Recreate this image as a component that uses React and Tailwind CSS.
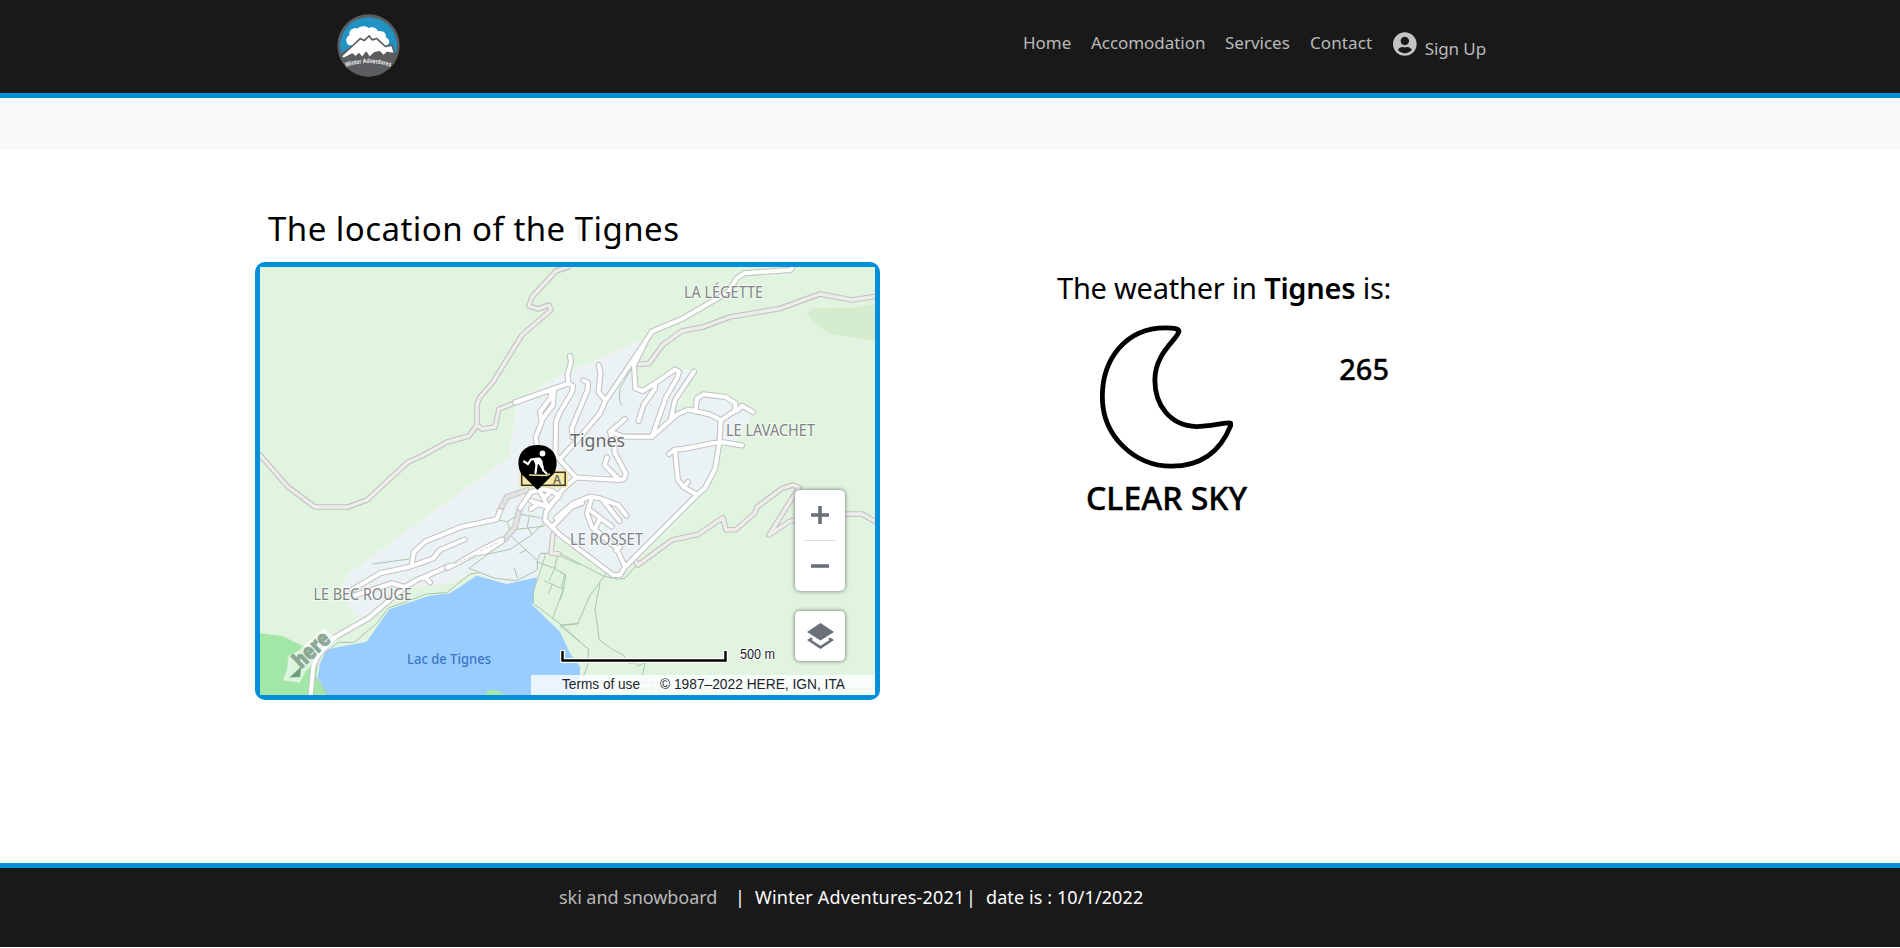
import React from "react";

const NAV = [
  { label: "Home", cls: "-ml-px w-[48px] tracking-[-0.05px]" },
  { label: "Accomodation", cls: "w-[114px] tracking-[-0.05px]" },
  { label: "Services", cls: "w-[65px] tracking-[0px]" },
  { label: "Contact", cls: "w-[63px] tracking-[0.1px]" },
];

function Logo() {
  return (
    <svg viewBox="0 0 190 190" className="h-[63px] w-[63px]">
      <circle cx="95" cy="95" r="94" fill="#5b5d60" />
      <path d="M12 118 A86 86 0 1 1 178 118 Z" fill="#2292c3" />
      <path d="M10 122 L34 103 L160 100 L181 122 L165 157 A93 93 0 0 1 25 157 Z" fill="#5b5d60" />
      <path
        d="M36 94 C24 88 26 68 38 64 C34 48 50 40 62 44 C72 34 90 36 94 42 C108 36 122 44 123 52 C138 48 150 58 147 70 C162 76 160 94 146 95 Z"
        fill="#fff"
      />
      <path
        d="M12 128 L38 104 L70 74 L82 80 L97 66 L106 78 L120 74 L146 98 L166 94 L174 120 L152 116 L140 126 L128 114 L112 118 L98 132 L88 116 L76 132 L66 120 L56 130 L46 121 L20 134 Z"
        fill="#fff"
        stroke="#5b5d60"
        strokeWidth="5"
        strokeLinejoin="round"
      />
      <path id="logoArc" d="M27 160 Q95 136 165 160" fill="none" />
      <text fill="#f2f2f2" fontFamily="Liberation Sans, sans-serif" fontWeight="700" fontSize="20">
        <textPath href="#logoArc" textLength="138" lengthAdjust="spacingAndGlyphs">
          Winter Adventures
        </textPath>
      </text>
    </svg>
  );
}

function UserIcon() {
  return (
    <svg viewBox="0 0 496 512" className="ml-px h-[26px] w-[25px]" fill="#c4c4c4">
      <path d="M248 8C111 8 0 119 0 256s111 248 248 248 248-111 248-248S385 8 248 8zm0 96c48.600 0 88 39.400 88 88s-39.400 88-88 88-88-39.400-88-88 39.400-88 88-88zm0 344c-58.700 0-111.300-26.600-146.500-68.200 18.800-35.400 55.600-59.800 98.500-59.800 2.400 0 4.800.4 7.100 1.100 13 4.200 26.600 6.900 40.900 6.900 14.300 0 28-2.700 40.900-6.900 2.300-.7 4.700-1.100 7.100-1.100 42.900 0 79.700 24.400 98.500 59.800C359.300 421.400 306.700 448 248 448z" />
    </svg>
  );
}

/* Roads with an unpaved or tunnel surface */
const MINOR = [
  "M568 267L556 271L532 297L529 306L538 309L549 305L551 310L522 335L493 382L480 397L477 404V425L469 436L447 442L422 456L408 462L367 500L348 507L315 507L288 487L260 455",
  "M477 425L482 429L495 427L499 409L517 402",
  "M636 364.500L649 363.500L663 344.500L682 331L703 327L730 317L780 308.500L820 294L852 300L875 296.500",
  "M633 558L638 565L672 540L698 534.500L723 517.500L726 530L736 529.500L755 513L757 507L782 488.500L793 485L799 487.500L769 535L790 521L845 514H862L875 521.500",
  "M553 534L551 553L559 554",
];
const TUNNEL = ["M499 512L507 497L527 490", "M505 539L515 527L520 508"];

const STREETS = [
  "M515 402.500L568 383.500L573 386L572 392L559.500 413L556 422L555.500 455L559.500 459.500L576 477.500L563 489L546 512L545 520L552 527L560 535L613 575H620L625 567L697 495L705 488L715 469L719.500 442L720.700 420L710 414.500L688 409.500L677 414.500L652 436.700H623L610 431.700L625 419",
  "M570 356L571 362L567.500 375L568.500 383",
  "M551 389V397L540 412L541.700 422L535.700 437L537 446",
  "M554 390L553 405L541.700 420",
  "M583.500 380.500L588 382.500L587.500 390L571.700 428.500L572.500 437",
  "M598.700 365L600.500 373L598.500 392L605 400",
  "M792 268L790 270L744 273.300L736.700 278.300L728.300 292L683.300 318.300L651.700 331.700L645 342.300L605 401.500L600 413.300L580 437L559.500 459.500",
  "M645 343L634 365L635.300 388.300L642.700 391L655 383.300L675 369.500L679 372L677 378.300L666 397L652 436.700",
  "M655 384V388.500L643.500 405L638.500 421",
  "M694 371.500L675 400L671 418",
  "M695.700 409L697 398.500L703.300 394.300L725.700 397L735.500 403.500L735 411L730 414L720.700 420.700M735 411L738 410L741.700 405.700L753 412",
  "M742 445.500L720 441.700L683 449L675 449.500L669 454M675 450L676.700 468.300L678 480L683.500 487L697.500 495M683.500 487L688 482",
  "M610 431.700L614 445L615 453.300L625.700 473.500L624 479L619 480L576 477.500M607 457.500L604.500 465L619 479.500",
  "M552 527L571.700 507L582 503M556 518L573.300 503.300L590 496.500L600 498.300L618 505L626.500 515.500M601.700 499L619.500 521M591.700 498L587 513.300L591.700 526.700L616.700 548.300L625 567M589 509.500L611.500 526.500M600 518.500L594.500 530M616 550L620 547",
  "M310.700 695L313.300 667L318.300 655L333.300 638.300L368.300 618.300L405 587L391.700 583.300L353.300 596M405 587L416.700 580L425 576.700L446.700 567M425 576.700L430 582.500",
  "M351.700 590L380 573.300L410 566.700L433.300 558.300L440 550L464.500 539.500",
  "M411.700 565L414 551.700L425 541.700L460 527.300L496.700 519.300L500 511",
  "M520 508L531 492L543 489L552 491L559 496L548 507L538 504L531 509M531 501L543 505M540 491L546 503M550 492L544 498",
];

const LABEL_FONT = "Noto Sans, Open Sans, sans-serif";

function MapLabel({ x, y, w, size = 16, fill = "#808384", weight = 400, halo = "#ffffff", children }) {
  return (
    <text
      x={x}
      y={y}
      textLength={w}
      lengthAdjust="spacingAndGlyphs"
      fontSize={size}
      fill={fill}
      fontWeight={weight}
      stroke={halo}
      strokeOpacity="0.6"
      strokeWidth="2"
      paintOrder="stroke"
      fontFamily={LABEL_FONT}
    >
      {children}
    </text>
  );
}

function TignesMap() {
  const minor = MINOR.join("");
  const tunnel = TUNNEL.join("");
  const streets = STREETS.join("");
  return (
    <svg viewBox="260 267 615 428" className="block h-[428px] w-[615px]">
      <rect x="260" y="267" width="615" height="428" fill="#e1f4e0" />
      <path d="M807 315L812 308.500L852 307.700L875 304.300V341L850 336.700L828 333.500Z" fill="#d5ecce" />
      <path
        d="M642 341L560 376L525 397L517 403L510 457L350 573L342 587L350 607L358 619L403 587L450 583L472 572L507 584L537 577L540 567L550 547L553 535L613 575L625 570L697 495L706 487L716 468L722 442L735 440L754 412L741 404L726 397L703 394L697 398L695 408L688 409L671 418L695 371L682 370.500L675 369L655 383L643 391L635 388L634 365L645 342Z"
        fill="#ebf2f5"
        stroke="#f1f1f0"
        strokeWidth="1.500"
      />
      <path d="M260 633.300L282 636L305 647L319 657L316 677L327 695H260Z" fill="#a2e6a8" />
      <path
        d="M326.700 649.300L366.700 641.700L389.300 609.300L428.300 596L450 593.300L476.700 575.700L506.700 584L536.700 577.300L532.300 605L560 631.700L570 653.300L580 666.700V677L576.700 695H326.700L317.700 677L320 663.300Z"
        fill="#9acdff"
      />
      <path d="M485 695L488 690L498 690.700L506 695Z" fill="#a2e6a8" />

      {/* Footpaths */}
      <g fill="none" stroke="#a9c6ae" strokeWidth="1">
        <path d="M631.700 368L620 388.300L619.300 400L621.700 405.700" />
        <g transform="translate(250 440) scale(0.33333)" strokeWidth="3">
          <path d="M368 372L478 357M205 655L265 607H313L385 545L413 505L530 462L590 458L660 402L688 398M657 385L715 342L780 328L845 285L880 250M657 385L735 415L800 422L862 390V362L785 290L772 245L745 240M772 245L808 222L870 233L885 245M785 270L885 258M838 230L832 258L845 285M808 340L830 330M792 383L803 415M862 360L872 340H925L913 385L860 365M872 340L887 342L850 455V490L935 555L990 605M925 345L990 375M913 385L947 405L940 448L882 422M897 422L917 378M940 448L907 538M895 462L908 430M935 555L985 550M198 710L232 765" />
        </g>
        <g transform="translate(560 470) scale(0.33333)" strokeWidth="3">
          <path d="M0 250L130 318L175 328L195 325L228 288M140 308L88 380L53 462L0 467L85 537V580L70 620M120 340L105 415L118 510L160 540L190 555L207 580L225 578L235 588L255 578L243 640M0 307L15 313L5 350L12 355L0 390M215 675L240 640L280 637L277 675" />
        </g>
      </g>

      <g fill="none" strokeLinejoin="round" strokeLinecap="round">
        <path d={minor} stroke="#c2c2c0" strokeWidth="5.600" />
        <path d={minor} stroke="#eeedea" strokeWidth="3.400" />
        <path d={tunnel} stroke="#c4c4c4" strokeWidth="6" />
        <path d={tunnel} stroke="#e2e2e2" strokeWidth="4" />
        <path d={streets} stroke="#c3c4c4" strokeWidth="6.200" />
        <path d={streets} stroke="#ffffff" strokeWidth="4" />
      </g>
      <path
        d="M444 568L447 564L453 563L476 550L501 537L505 538L504 543L487 554L476 556L451 569L447 571Z"
        fill="#fff"
        stroke="#c3c4c4"
        strokeWidth="1.200"
        strokeLinejoin="round"
      />
      <path d="M454 564L476 555M480 551L499 542" stroke="#d4d4d4" strokeDasharray="4 1" fill="none" />

      <MapLabel x="684" y="298" w="79">LA LÉGETTE</MapLabel>
      <MapLabel x="726" y="436" w="89">LE LAVACHET</MapLabel>
      <MapLabel x="570" y="447" w="55" size="18.500" fill="#66696b">Tignes</MapLabel>
      <MapLabel x="570" y="544.500" w="73">LE ROSSET</MapLabel>
      <MapLabel x="313.500" y="600" w="98.500">LE BEC ROUGE</MapLabel>
      <MapLabel x="407" y="664" w="84" size="13.500" fill="#3d76c6" weight="500" halo="#9acdff">
        Lac de Tignes
      </MapLabel>

      {/* Road shield */}
      <rect x="519.500" y="470.500" width="48.500" height="17" rx="2" fill="#f4e7a9" />
      <rect x="521.700" y="472.300" width="43.500" height="13" fill="#f4e7a9" stroke="#373527" strokeWidth="1.500" />
      <text x="553" y="483.500" fontSize="12" fill="#77715a" fontWeight="600" fontFamily={LABEL_FONT}>A</text>

      {/* Snowboarder pin */}
      <path
        d="M537.500 490L521.500 474C515 464 518 445 537.500 445C557 445 560 464 553.500 474Z"
        fill="#000"
      />
      <circle cx="542.500" cy="453.500" r="2.900" fill="#fff" />
      <path d="M533 459L540 457.500L542.500 461L543.500 468L541 468L538.500 464L536 466Z" fill="#fff" />
      <path
        d="M524 461.500L528 464L531 459.500L538 458.500M536.500 465L535.500 473M542 465L543 470L546.500 473.500"
        fill="none"
        stroke="#fff"
        strokeWidth="2.200"
        strokeLinejoin="round"
        strokeLinecap="round"
      />
      <path d="M529 475L546 475.500L550 474" fill="none" stroke="#e9dfaa" strokeWidth="1.600" />

      {/* Provider mark */}
      <g transform="translate(299 670) rotate(-43)">
        <path d="M-18 -3L-7 -9L2 -17L12 -14L46 -13L48 3L4 5L-8 9Z" fill="#fff" fillOpacity="0.600" stroke="#fff" strokeOpacity="0.300" strokeWidth="2" strokeLinejoin="round" />
        <text x="2" y="1" textLength="42" lengthAdjust="spacingAndGlyphs" fontSize="22" fontWeight="800" fill="#8ca795" stroke="#8ca795" strokeWidth="0.800" fontFamily="Open Sans, sans-serif">here</text>
        <path d="M-12 -1L4 -1L-4 6Z" fill="#6f9d80" />
      </g>

      {/* Attribution strip and scale bar */}
      <rect x="531" y="675" width="344" height="20" fill="#fff" fillOpacity="0.800" />
      <g fontFamily="Liberation Sans, sans-serif" fill="#20242c" fontSize="14">
        <text x="562" y="689" textLength="78" lengthAdjust="spacingAndGlyphs">Terms of use</text>
        <text x="660" y="689" textLength="185" lengthAdjust="spacingAndGlyphs">© 1987–2022 HERE, IGN, ITA</text>
        <text x="740" y="659" textLength="35" lengthAdjust="spacingAndGlyphs" stroke="#fff" strokeWidth="2" paintOrder="stroke">500 m</text>
      </g>
      <path d="M562.500 650V660.500H725.500V650" fill="none" stroke="#fff" strokeWidth="5" />
      <path d="M562.500 651V660.500H725.500V651" fill="none" stroke="#000" strokeWidth="2.400" />
    </svg>
  );
}

function MapControls() {
  return (
    <div className="absolute right-[30px] bottom-[34px] flex w-[50px] flex-col gap-5">
      <div className="flex h-[101px] flex-col items-center rounded-[5px] bg-white shadow-[0_0_4px_rgba(15,22,33,0.6)]">
        <div className="flex h-[50px] items-center justify-center">
          <svg viewBox="0 0 18 18" className="h-[18px] w-[18px]" stroke="#6a7078" strokeWidth="3.600">
            <path d="M0 9H18M9 0V18" />
          </svg>
        </div>
        <div className="h-px w-8 bg-[#dcdddf]" />
        <div className="flex h-[50px] items-center justify-center">
          <svg viewBox="0 0 18 18" className="h-[18px] w-[18px]" stroke="#6a7078" strokeWidth="3.600">
            <path d="M0 9H18" />
          </svg>
        </div>
      </div>
      <div className="flex h-[50px] items-center justify-center rounded-[5px] bg-white shadow-[0_0_4px_rgba(15,22,33,0.6)]">
        <svg viewBox="0 0 27 26" className="h-[26px] w-[27px]" fill="#6a7078">
          <path d="M13.500 0L27 9L13.500 17.500L0 9Z" />
          <path d="M0 17L4 14.500L6 16L4.500 17L13.500 22.800L22.500 17L21 16L23 14.500L27 17L13.500 26Z" />
        </svg>
      </div>
    </div>
  );
}

function Moon() {
  return (
    <svg viewBox="0 0 400 432" className="h-[144px] w-[133px]" fill="none" stroke="#000" strokeWidth="14.500" strokeLinejoin="round">
      <path d="M197 8C75 8 7 105 7 215C7 335 105 424 215 424C310 424 365 372 393 302Q397 292 385 294C355 297 325 305 290 305C210 302 165 240 165 165C165 85 230 45 237 20Q241 8 197 8Z" />
    </svg>
  );
}

export default function App() {
  return (
    <div className="flex h-[948px] w-[1900px] flex-col overflow-hidden bg-white font-['Noto_Sans','Open_Sans',sans-serif] text-black">
      <header className="flex h-[98px] shrink-0 justify-between border-b-[5px] border-[#008fd9] bg-[#191919] pr-[414px] pl-[337px]">
        <div className="pt-3.5">
          <Logo />
        </div>
        <nav className="flex gap-5 pt-[31px] text-[17px] leading-6 whitespace-nowrap text-[#b9b9b9]">
          {NAV.map((item) => (
            <a key={item.label} className={item.cls}>
              {item.label}
            </a>
          ))}
          <a className="-ml-px flex w-[94px] gap-2">
            <UserIcon />
            <span className="pt-1.5 tracking-[-0.1px]">Sign Up</span>
          </a>
        </nav>
      </header>

      <div className="h-[52px] shrink-0 bg-[#f8f9fb]" />

      <main className="flex h-[713px] shrink-0 pl-[255px]">
        <section className="w-[625px] pt-[54px]">
          <h1 className="h-[58px] pl-[13px] text-[33px] leading-[50px] tracking-[0.46px] whitespace-nowrap">
            The location of the Tignes
          </h1>
          <div className="relative h-[438px] w-[625px] rounded-[10px] border-[5px] border-[#008fd9]">
            <TignesMap />
            <MapControls />
          </div>
        </section>

        <section className="ml-[177px] w-[332px] pt-[118px]">
          <h2 className="text-[29px] leading-10 tracking-[-0.23px] whitespace-nowrap">
            The weather in <b className="font-semibold">Tignes</b> is:
          </h2>
          <div className="flex justify-between">
            <div className="flex w-[220px] flex-col pt-[17px] pl-[30px]">
              <div className="pl-[13px]">
                <Moon />
              </div>
              <p className="-ml-px pt-[5px] text-[32px] leading-[48px] font-medium whitespace-nowrap [-webkit-text-stroke:0.4px_black]">
                CLEAR SKY
              </p>
            </div>
            <p className="pt-[41px] text-[29px] leading-10 font-medium [-webkit-text-stroke:0.3px_black]">265</p>
          </div>
        </section>
      </main>

      <footer className="shrink-0 border-t-[5px] border-[#008fd9]">
        <div className="flex h-[79px] bg-[#191919] pt-[17px] pl-[559px] text-[18px] leading-6 whitespace-nowrap text-white">
          <span className="w-[176px] tracking-[-0.05px] text-[#b9b9b9]">ski and snowboard</span>
          <span className="w-[20px]">|</span>
          <span className="w-[211px] tracking-[0.22px]">Winter Adventures-2021</span>
          <span className="w-[20px]">|</span>
          <span className="tracking-[0.1px]">date is : 10/1/2022</span>
        </div>
      </footer>
    </div>
  );
}
